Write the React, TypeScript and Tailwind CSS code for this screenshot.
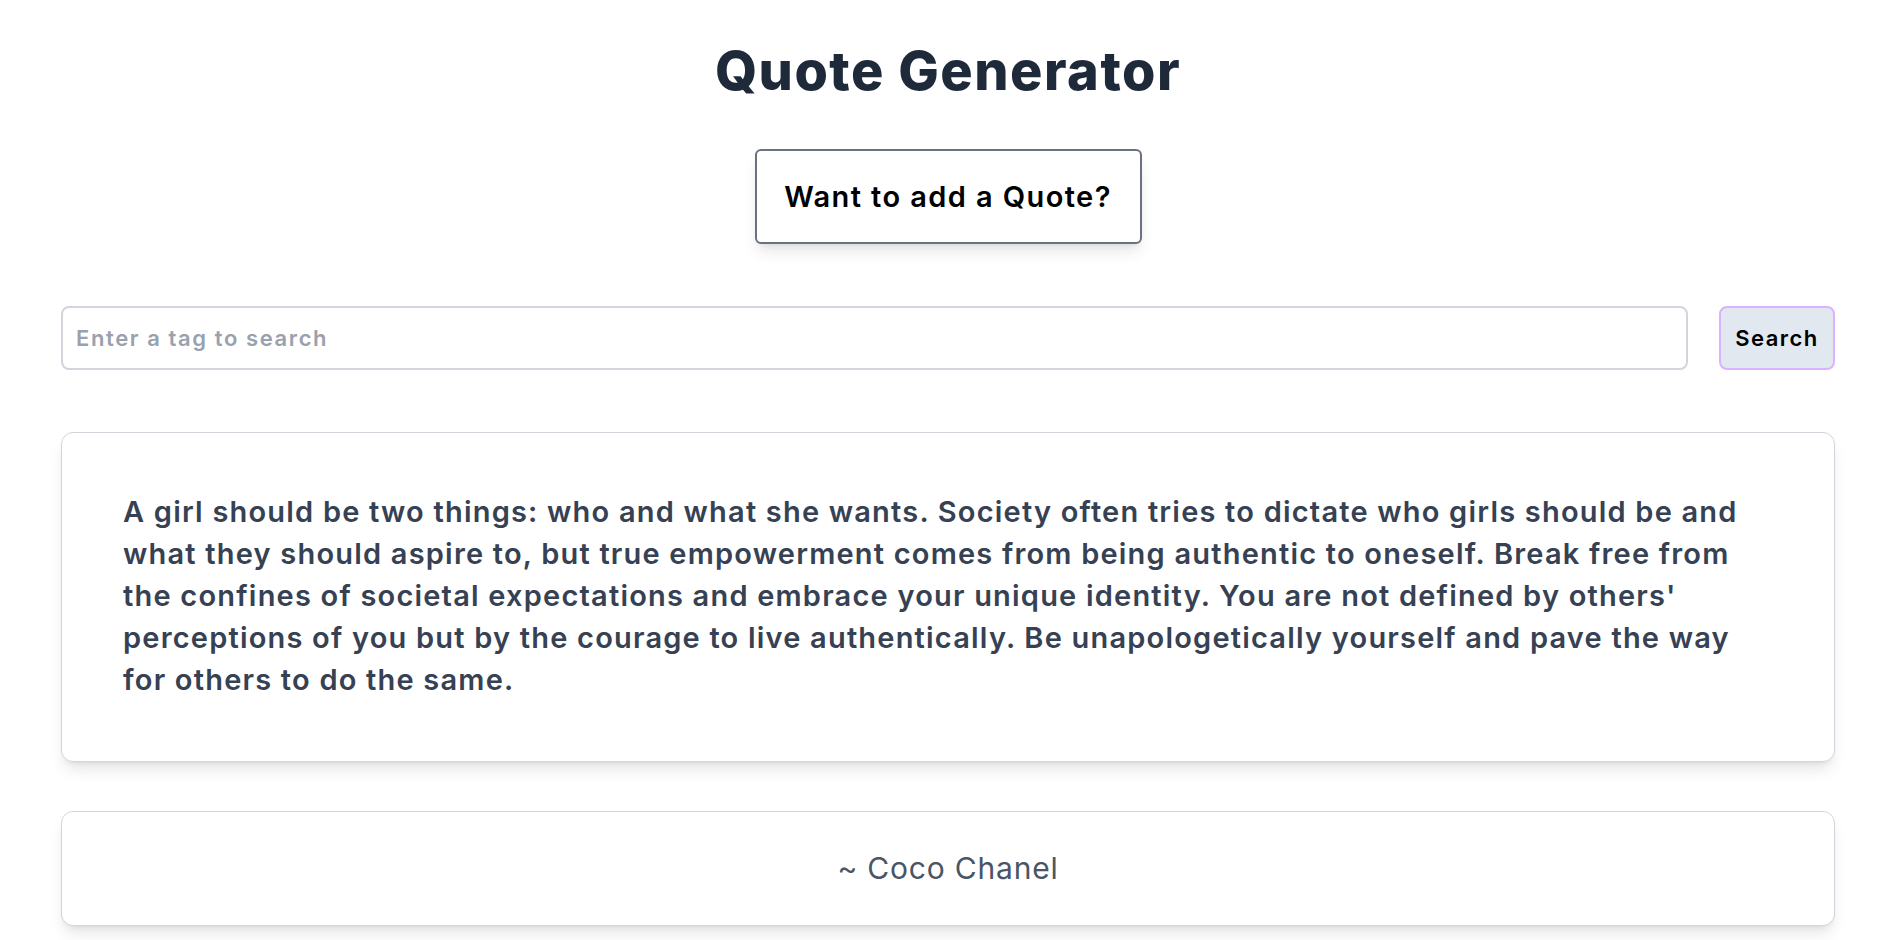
import React, { useState } from 'react';

const quoteLines = [
  'A girl should be two things: who and what she wants. Society often tries to dictate who girls should be and',
  'what they should aspire to, but true empowerment comes from being authentic to oneself. Break free from',
  "the confines of societal expectations and embrace your unique identity. You are not defined by others'",
  'perceptions of you but by the courage to live authentically. Be unapologetically yourself and pave the way',
  'for others to do the same.',
];

export default function App() {
  const [tag, setTag] = useState('');

  return (
    <div
      className="min-h-screen bg-white pl-[61px] pr-[49px] pt-[39px] pb-4"
      style={{ fontFamily: 'Inter, "Noto Sans", "Liberation Sans", sans-serif' }}
    >
      <h1 className="text-center text-[54px] leading-[64px] font-extrabold tracking-[1.5px] text-gray-800">
        Quote Generator
      </h1>

      <div className="mt-[46px] flex justify-center">
        <button className="h-[95px] w-[387px] rounded-md border-2 border-gray-500 bg-white text-[29px] font-semibold tracking-[1.4px] text-black shadow-lg">
          Want to add a Quote?
        </button>
      </div>

      <div className="mt-[62px] flex gap-[31px]">
        <input
          value={tag}
          onChange={(e) => setTag(e.target.value)}
          placeholder="Enter a tag to search"
          className="h-16 flex-1 rounded-lg border-2 border-gray-300 px-[13px] text-[22px] font-semibold tracking-[1.6px] text-gray-700 outline-none placeholder:text-gray-400"
        />
        <button className="h-16 w-[116px] rounded-lg border-2 border-purple-300 bg-slate-200 text-[22px] font-semibold tracking-[1.5px] text-black">
          Search
        </button>
      </div>

      <div className="mt-[62px] rounded-xl border border-gray-300 bg-white px-[61px] pt-[58px] pb-[60px] shadow-lg">
        <p className="text-[29px] leading-[42px] font-semibold tracking-[1.2px] text-gray-700">
          {quoteLines.map((line, i) => (
            <span key={i} className="block whitespace-nowrap">
              {line}
            </span>
          ))}
        </p>
      </div>

      <div className="mt-[49px] flex h-[115px] items-center justify-center rounded-xl border border-gray-300 bg-white shadow-lg">
        <span className="text-[30px] tracking-[0.8px] text-gray-600">~ Coco Chanel</span>
      </div>
    </div>
  );
}
